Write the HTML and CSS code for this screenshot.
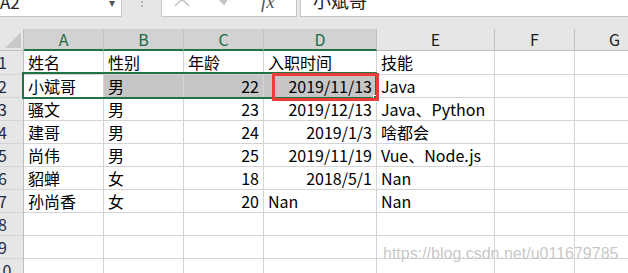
FILE: index.html
```html
<!DOCTYPE html>
<html>
  <head>
    <meta charset="UTF-8" />
    <title>Excel 表格</title>
    <link rel="stylesheet" href="styles.css">
  </head>
  <body>
    <!-- formula bar, top half scrolled out of view -->
    <div class="formula-bar">
      <div class="name-box">
        <span>A2</span>
        <span class="drop">▾</span>
      </div>
      <div class="grip">
        <svg width="3" height="12" viewBox="0 0 3 12">
          <rect x="0" y="0" width="2" height="2" fill="#b4b4b4" />
          <rect x="0" y="4" width="2" height="2" fill="#b4b4b4" />
          <rect x="0" y="8" width="2" height="2" fill="#b4b4b4" />
        </svg>
      </div>
      <div class="fx-buttons">
        <svg class="btn-cancel" width="16" height="16" viewBox="0 0 16 16">
          <path d="M1 1 L15 15 M15 1 L1 15" stroke="#c4c4c4" stroke-width="1.6" fill="none" />
        </svg>
        <svg class="btn-enter" width="18" height="18" viewBox="0 0 18 18">
          <polyline points="2,8 9,15 17,1" stroke="#c4c4c4" stroke-width="3" fill="none" />
        </svg>
        <span class="fx">fx</span>
      </div>
      <div class="formula-input">小斌哥</div>
    </div>

    <!-- worksheet grid -->
    <div class="sheet">
      <div class="corner">
        <svg width="16" height="16" viewBox="0 0 16 16">
          <polygon points="16,0 16,16 0,16" fill="#c8c8c8" />
        </svg>
      </div>
      <div class="col-head active">A</div>
      <div class="col-head active">B</div>
      <div class="col-head active">C</div>
      <div class="col-head active">D</div>
      <div class="col-head">E</div>
      <div class="col-head">F</div>
      <div class="col-head">G</div>

      <div class="row-head">1</div>
      <div class="cell">姓名</div>
      <div class="cell">性别</div>
      <div class="cell">年龄</div>
      <div class="cell">入职时间</div>
      <div class="cell">技能</div>
      <div class="cell"></div>
      <div class="cell"></div>

      <div class="row-head">2</div>
      <div class="cell">小斌哥</div>
      <div class="cell sel">男</div>
      <div class="cell sel num">22</div>
      <div class="cell sel num">2019/11/13</div>
      <div class="cell">Java</div>
      <div class="cell"></div>
      <div class="cell"></div>

      <div class="row-head">3</div>
      <div class="cell">骚文</div>
      <div class="cell">男</div>
      <div class="cell num">23</div>
      <div class="cell num">2019/12/13</div>
      <div class="cell">Java、Python</div>
      <div class="cell"></div>
      <div class="cell"></div>

      <div class="row-head">4</div>
      <div class="cell">建哥</div>
      <div class="cell">男</div>
      <div class="cell num">24</div>
      <div class="cell num">2019/1/3</div>
      <div class="cell">啥都会</div>
      <div class="cell"></div>
      <div class="cell"></div>

      <div class="row-head">5</div>
      <div class="cell">尚伟</div>
      <div class="cell">男</div>
      <div class="cell num">25</div>
      <div class="cell num">2019/11/19</div>
      <div class="cell">Vue、Node.js</div>
      <div class="cell"></div>
      <div class="cell"></div>

      <div class="row-head">6</div>
      <div class="cell">貂蝉</div>
      <div class="cell">女</div>
      <div class="cell num">18</div>
      <div class="cell num">2018/5/1</div>
      <div class="cell">Nan</div>
      <div class="cell"></div>
      <div class="cell"></div>

      <div class="row-head">7</div>
      <div class="cell">孙尚香</div>
      <div class="cell">女</div>
      <div class="cell num">20</div>
      <div class="cell">Nan</div>
      <div class="cell">Nan</div>
      <div class="cell"></div>
      <div class="cell"></div>

      <div class="row-head">8</div>
      <div class="cell"></div>
      <div class="cell"></div>
      <div class="cell"></div>
      <div class="cell"></div>
      <div class="cell"></div>
      <div class="cell"></div>
      <div class="cell"></div>

      <div class="row-head">9</div>
      <div class="cell"></div>
      <div class="cell"></div>
      <div class="cell"></div>
      <div class="cell"></div>
      <div class="cell"></div>
      <div class="cell"></div>
      <div class="cell"></div>

      <div class="row-head">10</div>
      <div class="cell"></div>
      <div class="cell"></div>
      <div class="cell"></div>
      <div class="cell"></div>
      <div class="cell"></div>
      <div class="cell"></div>
      <div class="cell"></div>
    </div>

    <!-- overlays: selection, fill handle, red mark, watermark -->
    <div class="selection"></div>
    <div class="fill-handle"></div>
    <div class="mark"></div>
    <div class="watermark">https://blog.csdn.net/u011679785</div>
  </body>
</html>
```

FILE: styles.css
```css
html, body {
  margin: 0;
  overflow: hidden;
}
body {
  position: relative;
  width: 628px;
  height: 273px;
  background: #fff;
  font-family: "Noto Sans CJK SC", "Noto Sans", sans-serif;
  color: #000;
}

/* formula bar */
.formula-bar {
  display: flex;
  height: 49px;
  margin-top: -20px;
  background: #e6e6e6;
  box-sizing: border-box;
}
.name-box {
  display: flex;
  justify-content: space-between;
  width: 122px;
  height: 37px;
  box-sizing: border-box;
  padding: 12px 6px 0 0;
  background: #fff;
  border-right: 1px solid #c6c6c6;
  border-bottom: 1px solid #c6c6c6;
  font-size: 17px;
  line-height: 20px;
  color: #222;
}
.name-box .drop {
  font-size: 12px;
  color: #555;
}
.grip {
  width: 39px;
  padding: 17px 0 0 19px;
  box-sizing: border-box;
}
.grip svg {
  display: block;
}
.fx-buttons {
  display: flex;
  align-items: flex-start;
  width: 136px;
  height: 37px;
  box-sizing: border-box;
  padding-top: 11px;
  background: #fff;
  border: 1px solid #c6c6c6;
  border-top: none;
}
.btn-cancel {
  margin-left: 12px;
}
.btn-enter {
  margin-left: 25px;
  margin-top: -3px;
}
.fx {
  margin-left: 28px;
  margin-top: 1px;
  font-family: "Liberation Serif", serif;
  font-style: italic;
  font-size: 19px;
  line-height: 20px;
  color: #555;
}
.formula-input {
  flex: 1;
  height: 37px;
  margin-left: 3px;
  box-sizing: border-box;
  padding: 10px 0 0 12px;
  background: #fff;
  border-left: 1px solid #c6c6c6;
  border-bottom: 1px solid #c6c6c6;
  font-size: 18px;
  line-height: 20px;
  color: #222;
}

/* sheet */
.sheet {
  display: grid;
  grid-template-columns: 33px 80px 80px 80px 113px 118px 80px 80px;
  grid-template-rows: 22px 24px repeat(9, 23px);
  margin-left: -9px;
  font-size: 16px;
}
.corner {
  display: flex;
  align-items: flex-end;
  justify-content: flex-end;
  padding: 0 2px 2px 0;
  background: #e6e6e6;
  border-right: 1px solid #bdbdbd;
  border-bottom: 1px solid #bdbdbd;
}
.corner svg {
  display: block;
}
.col-head {
  box-sizing: border-box;
  background: #e6e6e6;
  border-right: 1px solid #c0c0c0;
  border-bottom: 1px solid #bdbdbd;
  text-align: center;
  line-height: 21px;
  color: #1b1b1b;
}
.col-head.active {
  background: #d2d2d2;
  border-bottom: 2px solid #217346;
  color: #1d6b48;
}
.row-head {
  box-sizing: border-box;
  background: #e6e6e6;
  border-right: 1px solid #bdbdbd;
  border-bottom: 1px solid #d4d4d4;
  padding-right: 9px;
  text-align: center;
  line-height: 23px;
  color: #1f2a44;
}
.cell {
  box-sizing: border-box;
  padding: 0 4px;
  border-right: 1px solid #d4d4d4;
  border-bottom: 1px solid #d4d4d4;
  line-height: 23px;
  white-space: nowrap;
}
.cell.num {
  text-align: right;
}
.cell.sel {
  background: #c6c6c6;
}

/* overlays */
.selection {
  position: absolute;
  left: 22px;
  top: 72px;
  width: 355px;
  height: 27px;
  box-sizing: border-box;
  border: 2px solid #217346;
}
.fill-handle {
  position: absolute;
  left: 373px;
  top: 95px;
  width: 5px;
  height: 5px;
  background: #217346;
  border: 1px solid #fff;
}
.mark {
  position: absolute;
  left: 272px;
  top: 73px;
  width: 107px;
  height: 28px;
  box-sizing: border-box;
  border: 3px solid #ee3b3b;
}
.watermark {
  position: absolute;
  left: 383px;
  top: 246px;
  font-family: "Liberation Sans", Arial, sans-serif;
  font-size: 16px;
  line-height: 16px;
  color: rgba(160, 160, 160, 0.6);
  text-shadow: 0 0 1px #fff;
}
```
